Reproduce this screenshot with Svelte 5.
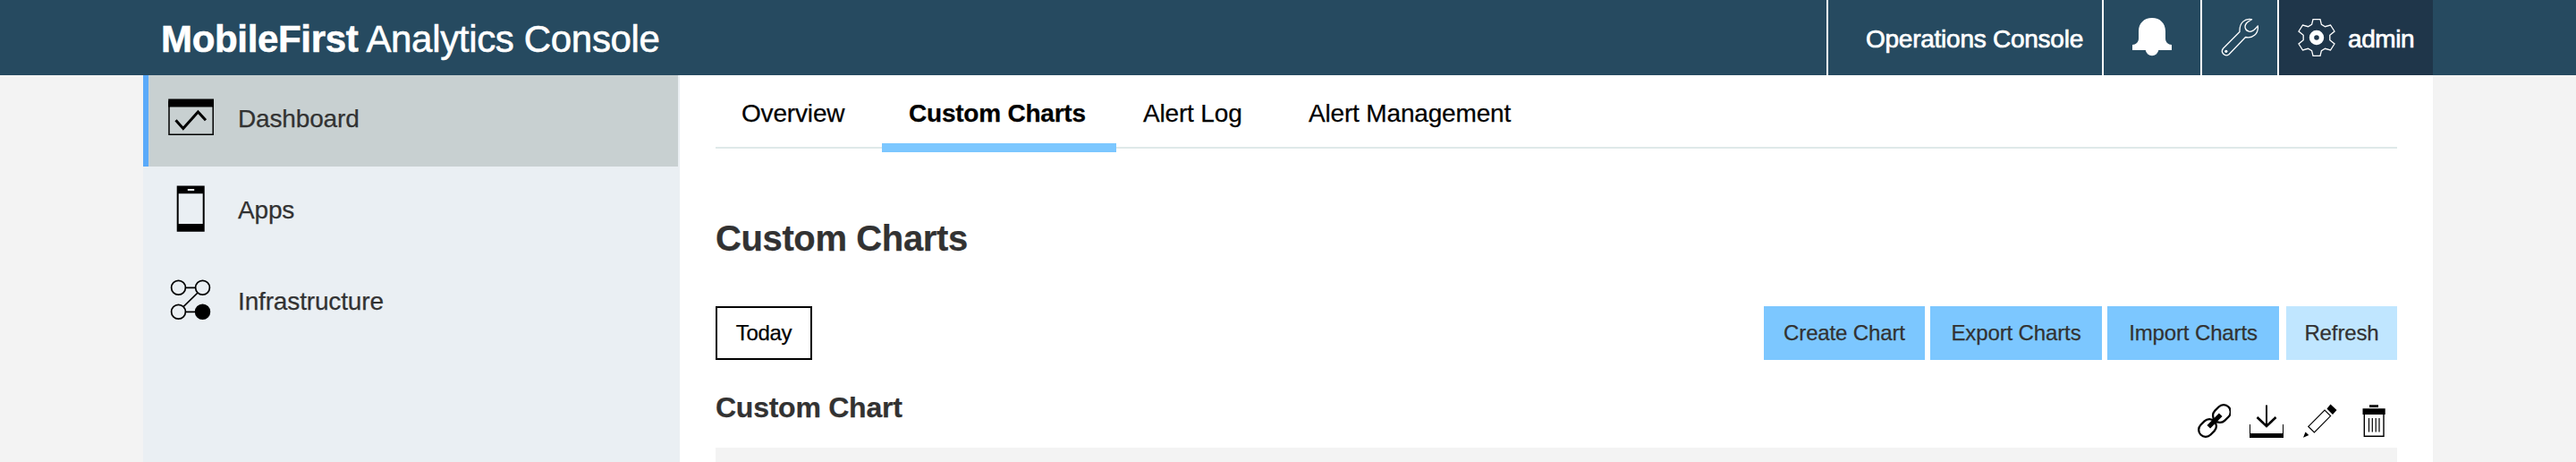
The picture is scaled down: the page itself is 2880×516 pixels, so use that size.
<script>
  const tabs = [
    { label: 'Overview', cls: 'overview' },
    { label: 'Custom Charts', cls: 'custom active' },
    { label: 'Alert Log', cls: 'log' },
    { label: 'Alert Management', cls: 'management' }
  ];
  const nav = ['Dashboard', 'Apps', 'Infrastructure'];
</script>

<div class="page">
  <header>
    <div class="brand"><b>MobileFirst</b> Analytics Console</div>
    <div class="tools">
      <a class="cell ops" href="#ops">Operations Console</a>
      <div class="cell bell">
        <svg width="44" height="44" viewBox="0 0 44 44"><path fill="#fff" d="M7 15C7 6 13 0 22 0s15 6 15 15v8c0 4 3 7 7 7v6H29.3A7.4 7.4 0 0 1 14.700 36H0v-6c4 0 7-3 7-7z" /></svg>
      </div>
      <div class="cell wrench">
        <svg width="44" height="44" viewBox="0 0 44 44"><g fill="none" stroke="#fff" stroke-width="1.300" stroke-linejoin="round"><path d="M34.500 1.700C27 .3 20.500 5 21 15.500L2.600 34C-1 38.500 4.500 44 9 40.700L27.500 21.500C35 23.500 42.300 18 41.300 8.800C37.500 13.500 35 16 31.500 15.200C27 14 25.800 9.500 28.500 6C30 4 32.500 3 34.500 1.700Z" /></g><circle cx="5.800" cy="37.300" r="1.600" fill="#fff" /></svg>
      </div>
      <div class="cell admin">
        <svg width="44" height="44" viewBox="-22 -22 44 44"><path fill="none" stroke="#fff" stroke-width="1.300" d="M-4 -20.300H4L5.400 -14.600L9.500 -12.300L15.500 -14L20 -7L14.800 -2.800V2.800L20 7L15.500 14L9.500 12.300L5.400 14.600L4 20.300H-4L-5.400 14.600L-9.500 12.300L-15.500 14L-20 7L-14.800 2.800V-2.800L-20 -7L-15.500 -14L-9.500 -12.300L-5.400 -14.600Z" /><circle r="5.500" fill="none" stroke="#fff" stroke-width="5.400" /></svg>
        <span>admin</span>
      </div>
    </div>
  </header>

  <div class="body">
    <nav>
      {#each nav as item, i}
        <a class="item" class:active={i === 0} href="#{item}">
          {#if i === 0}
            <svg width="52" height="52" viewBox="0 0 52 52"><path fill="none" stroke="#000" stroke-width="1.500" d="M1 7V44.200H50.200V7" /><path d="M.2 4.600H51V13.500H.2z" /><path fill="none" stroke="#000" stroke-width="3" d="M8.500 28.200L16.800 37.400L33.400 19L42 28.200" /></svg>
          {:else if i === 1}
            <svg width="52" height="52" viewBox="0 0 52 52"><path fill-rule="evenodd" d="M9.700 .4H40.700V51.800H9.700zM11.700 9.300V43H38.700V9.300zM21.800 4V6H29.200V4z" /></svg>
          {:else}
            <svg width="52" height="52" viewBox="0 0 52 52"><g fill="none" stroke="#000" stroke-width="1.700"><circle cx="11.500" cy="11.300" r="7.900" /><circle cx="38.500" cy="11.300" r="7.900" /><circle cx="11.500" cy="38.300" r="7.900" /><circle cx="38.500" cy="38.300" r="7.900" fill="#000" /><path d="M19.400 11.300H30.600M19.400 38.300H30.600M33 17L17 32.700" /></g></svg>
          {/if}
          <span>{item}</span>
        </a>
      {/each}
    </nav>

    <main>
      <div class="tabs">
        {#each tabs as tab}
          <a class="tab {tab.cls}" href="#{tab.label}">{tab.label}</a>
        {/each}
      </div>
      <h1>Custom Charts</h1>
      <div class="bar">
        <button class="today">Today</button>
        <div class="actions">
          <button class="create">Create Chart</button>
          <button>Export Charts</button>
          <button>Import Charts</button>
          <button class="refresh">Refresh</button>
        </div>
      </div>
      <div class="charthead">
        <h2>Custom Chart</h2>
        <div class="icons">
          <svg width="40" height="40" viewBox="0 0 40 40"><g transform="rotate(-45 22 20)" fill="none" stroke="#000"><rect x="0" y="12.200" width="21.500" height="15.600" rx="7.800" stroke-width="2.300" /><rect x="22.500" y="12.200" width="21.500" height="15.600" rx="7.800" stroke-width="2.300" /><path d="M12.500 20H31.500" stroke-width="5.200" /></g></svg>
          <svg width="40" height="40" viewBox="0 0 40 40"><path d="M1 34H39V39H1z" /><path fill="none" stroke="#000" stroke-width="1" d="M1.500 24V36M38.500 24V36" /><path fill="none" stroke="#000" stroke-width="2" d="M20 2.500V26" /><path fill="none" stroke="#000" stroke-width="2.600" d="M9.500 16L20 26L30.500 16" /></svg>
          <svg width="40" height="40" viewBox="0 0 40 40"><path fill="none" stroke="#000" stroke-width="1.200" d="M6.800 26.400L25 8L31.600 14.600L13.400 33z" /><path d="M1 38.800L3.500 32.500L7.300 36zM27.500 6.500L31.500 1.500L38.500 8L34 13z" /></svg>
          <svg width="40" height="40" viewBox="0 0 40 40"><path d="M15 2.200H25V5H15zM7.500 6.200H32.700V13H7.500z" /><path fill="none" stroke="#000" stroke-width="1.400" d="M9.300 12V37.300H31V12" /><path fill="none" stroke="#000" stroke-width="1.200" d="M14.500 17V32.500M18.300 17V32.500M22.200 17V32.500M26 17V32.500" /></svg>
        </div>
      </div>
      <div class="panel"></div>
    </main>
  </div>
</div>

<style>
  :global(body) { margin: 0; background: #f3f3f3; }
  .page { width: 2880px; height: 516px; overflow: hidden; font: 28px/1 "Liberation Sans", Arial, sans-serif; color: #323232; -webkit-text-stroke: 0.250px currentColor; }
  a { color: inherit; text-decoration: none; }
  svg { display: block; flex: none; }
  header { height: 84px; padding: 0 160px; background: #264a60; color: #fff; display: flex; justify-content: space-between; }
  .brand { padding-left: 20px; font-size: 42px; line-height: 88px; letter-spacing: -0.330px; white-space: pre; -webkit-text-stroke: 0.600px #fff; }
  .tools { display: flex; }
  .cell { box-sizing: border-box; height: 84px; border-left: 2px solid #fff; line-height: 88px; display: flex; white-space: nowrap; }
  .ops { width: 308px; padding-left: 42px; letter-spacing: -0.250px; -webkit-text-stroke: 0.700px #fff; }
  .bell { width: 110px; padding: 20px 0 0 32px; }
  .wrench { width: 86px; padding: 20px 0 0 21px; }
  .admin { width: 174px; background: #1f364a; padding-left: 20px; letter-spacing: -0.400px; -webkit-text-stroke: 0.700px #fff; }
  .admin svg { margin-top: 20px; }
  .admin span { margin-left: 13px; }
  .body { display: flex; height: 432px; margin: 0 160px; background: #fff; }
  nav { width: 600px; background: #eaeff3; flex: none; }
  .item { box-sizing: border-box; width: 598px; height: 102px; border-left: 6px solid transparent; padding-left: 22px; display: flex; line-height: 97px; letter-spacing: -0.150px; }
  .item.active { background: #c8d0d1; border-color: #5aaafa; }
  .item svg { margin-top: 22px; }
  .item:nth-child(2) svg { margin-top: 21px; }
  .item span { margin-left: 26px; }
  main { flex: 1; padding: 0 40px; }
  .tabs { display: flex; height: 80px; border-bottom: 2px solid #dfe9e9; color: #000; }
  .tab { box-sizing: border-box; height: 86px; line-height: 85px; padding-left: 30px; letter-spacing: -0.170px; white-space: nowrap; }
  .overview { width: 186px; padding-left: 29px; }
  .custom { width: 262px; }
  .log { width: 185px; }
  .active.tab { font-weight: bold; border-bottom: 10px solid #7cc7ff; letter-spacing: -0.220px; }
  h1 { margin: 60px 0 0; height: 116px; font-size: 40px; line-height: 80px; letter-spacing: -0.380px; }
  .bar { display: flex; justify-content: space-between; height: 60px; }
  .actions { display: flex; gap: 6px; }
  button { width: 192px; height: 60px; padding: 0; border: 0; background: #7cc7ff; color: #323232; font: 24px/60px "Liberation Sans", Arial, sans-serif; letter-spacing: -0.130px; -webkit-text-stroke: inherit; }
  .create { width: 180px; }
  .refresh { width: 124px; margin-left: 2px; background: #c0e6ff; }
  .today { width: 108px; border: 2px solid #000; background: #fff; color: #000; line-height: 56px; letter-spacing: -0.300px; }
  .charthead { display: flex; justify-content: space-between; height: 98px; }
  h2 { margin: 23px 0 0; font-size: 32px; line-height: 60px; letter-spacing: -0.250px; }
  .icons { display: flex; gap: 20px; padding: 48px 6px 0 0; }
  .panel { height: 20px; background: #f3f3f3; }
</style>
